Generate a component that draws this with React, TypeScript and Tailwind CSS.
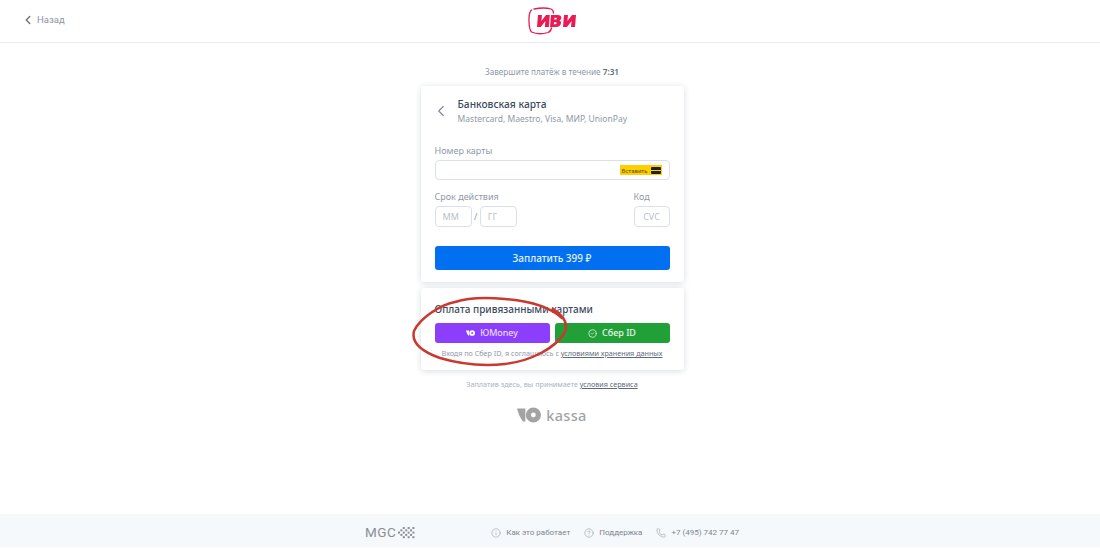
import { ChevronLeft, Info, CircleHelp, Phone, CircleCheck } from "lucide-react"

function IviLogo() {
  return (
    <svg width="52" height="28" viewBox="0 0 52 28" fill="none">
      <path
        d="M6 2 C12 .8 19 .8 23 2 C25 2.8 25.5 4 25.5 6 M3.5 3 C1.2 5 .8 9 1 14 C1.1 19 1.6 23 3.5 25 C8 27 15 27 20 25.5 C22 24.8 23 23.5 23.5 21"
        stroke="#ea1a55"
        strokeWidth="1.3"
        strokeLinecap="round"
      />
      <path
        d="M10 8h4l-.6 6L18 8h3.8l-1 12h-4l.6-6-4.6 6H9z M23 8h6.5c2.8 0 4 1.2 3.8 3-.1 1.2-.8 2-1.8 2.4 1.1.4 1.7 1.3 1.5 2.6-.3 2.6-2.1 4-5 4H22z M26.5 10.8l-.2 1.8h1.3c.7 0 1.1-.3 1.2-.9.1-.6-.2-.9-.9-.9z M26 15.2l-.2 2h1.5c.8 0 1.2-.4 1.3-1 .1-.6-.3-1-1-1z M36 8h4l-.6 6L44 8h4l-1 12h-4l.6-6-4.6 6H35z"
        fill="#ea1a55"
        fillRule="evenodd"
      />
    </svg>
  )
}

function YooIcon({ className, color }: { className: string; color: string }) {
  return (
    <svg className={className} viewBox="0 0 30 20" fill="none">
      <path d="M0 2h10.5v16H7.5C4 14 1.5 8 0 2z" fill={color} />
      <circle cx="20.5" cy="10" r="6.25" stroke={color} strokeWidth="6.5" />
    </svg>
  )
}

function MgcMark() {
  const dots = []
  for (let r = 0; r < 5; r++) {
    for (let c = 0; c < 7; c++) {
      if ((r + c) % 2 === 0 && !(r === 0 && c === 0) && !(r === 4 && c === 0)) {
        dots.push(<rect key={`${r}-${c}`} x={c * 2.4} y={r * 2.3} width="2" height="2" fill="#8b8f94" />)
      }
    }
  }
  return (
    <svg width="17" height="12" viewBox="0 0 17 12">
      {dots}
    </svg>
  )
}

export default function App() {
  return (
    <div className="relative flex h-[548px] w-[1100px] flex-col overflow-hidden bg-white font-['Noto_Sans',sans-serif]">
      {/* Header */}
      <header className="relative flex h-[43px] shrink-0 items-center justify-center border-b border-[#e9ecef]">
        <div className="absolute left-[21px] top-[13px] flex items-center gap-[2px] text-[#8d96a3]">
          <ChevronLeft className="h-[14px] w-[14px] text-[#6b7480]" strokeWidth={2.5} />
          <span className="font-['Roboto',sans-serif] text-[9.5px]">Назад</span>
        </div>
        <div className="ml-[7px] mt-[-1px]">
          <IviLogo />
        </div>
      </header>

      {/* Content */}
      <main className="flex flex-1 flex-col items-center pl-[4px]">
        <p className="mt-[22px] text-[8.2px] leading-[14px] text-[#8f99a8]">
          Завершите платёж в течение <span className="font-semibold text-[#5f6b7b]">7:31</span>
        </p>

        <section className="mt-[7px] h-[196px] w-[263px] rounded-[3px] bg-white px-[14px] pt-[11px] shadow-[0_1px_6px_rgba(40,60,90,0.18)]">
          <div className="flex items-start">
            <ChevronLeft className="ml-[-3px] mt-[5px] h-[18px] w-[18px] text-[#7c8794]" strokeWidth={1.5} />
            <div className="ml-[8px]">
              <h2 className="text-[10.2px] font-medium leading-[14px] text-[#3c4a5e]">Банковская карта</h2>
              <p className="mt-[1px] text-[8.55px] leading-[14px] text-[#8f99a8]">Mastercard, Maestro, Visa, МИР, UnionPay</p>
            </div>
          </div>

          <label className="mt-[19px] block text-[9px] leading-[12px] text-[#8f99a8]">Номер карты</label>
          <div className="mt-[3px] flex h-[20px] w-[235px] items-center justify-end rounded-[4px] border-[1.5px] border-[#d9dfeb] pr-[7px]">
            <div className="flex h-[10px] items-center gap-[3px] bg-[#ffcf00] px-[1px]">
              <span className="font-['Roboto',sans-serif] text-[6px] text-[#5c5200]">Вставить</span>
              <div className="flex h-[7px] w-[10px] flex-col justify-center rounded-[1px] bg-[#222]">
                <div className="h-[1px] bg-[#ffcf00]" />
              </div>
            </div>
          </div>

          <div className="mt-[11px] flex w-[235px] justify-between">
            <div>
              <div className="text-[9px] leading-[12px] text-[#8f99a8]">Срок действия</div>
              <div className="mt-[3px] flex items-center gap-[2.5px]">
                <div className="flex h-[21px] w-[37px] items-center rounded-[4px] border-[1.5px] border-[#d9dfeb] pl-[7px] text-[9px] text-[#b8bfca]">ММ</div>
                <span className="text-[9px] text-[#8f99a8]">/</span>
                <div className="flex h-[21px] w-[37px] items-center rounded-[4px] border-[1.5px] border-[#d9dfeb] pl-[7px] text-[9px] text-[#b8bfca]">ГГ</div>
              </div>
            </div>
            <div>
              <div className="text-[9px] leading-[12px] text-[#8f99a8]">Код</div>
              <div className="mt-[3px] flex h-[21px] w-[36px] items-center justify-center rounded-[4px] border-[1.5px] border-[#d9dfeb] text-[9px] text-[#b8bfca]">CVC</div>
            </div>
          </div>

          <button className="mt-[19px] flex h-[24px] w-[235px] items-center justify-center rounded-[3px] bg-[#0070f0] text-[10px] font-medium text-white/90">
            Заплатить 399 ₽
          </button>
        </section>

        <section className="mt-[6px] h-[82px] w-[263px] rounded-[3px] bg-white px-[14px] pt-[14px] shadow-[0_1px_6px_rgba(40,60,90,0.18)]">
          <h3 className="text-[10px] font-medium leading-[14px] text-[#3c4a5e]">Оплата привязанными картами</h3>
          <div className="mt-[7px] flex w-[235px] justify-between">
            <button className="flex h-[20px] w-[115px] items-center justify-center gap-[5px] rounded-[3px] bg-[#8b3ffd] text-[9px] text-white/90">
              <YooIcon className="h-[6px] w-[9px]" color="#ffffff" />
              ЮMoney
            </button>
            <button className="flex h-[20px] w-[115px] items-center justify-center gap-[5px] rounded-[3px] bg-[#21a038] text-[9px] font-medium text-white/90">
              <CircleCheck className="h-[9px] w-[9px]" />
              Сбер ID
            </button>
          </div>
          <p className="mt-[4px] whitespace-nowrap text-center text-[7.2px] leading-[12px] text-[#8f99a8]">
            Входя по Сбер ID, я соглашаюсь с <span className="text-[#5f6b7b] underline">условиями хранения данных</span>
          </p>
        </section>

        <p className="mt-[8px] text-[7.2px] leading-[12px] text-[#aab2bf]">
          Заплатив здесь, вы принимаете <span className="text-[#5f6b7b] underline">условия сервиса</span>
        </p>

        <div className="mt-[17px] flex items-center gap-[5px]">
          <YooIcon className="h-[16px] w-[24px]" color="#a3a3a3" />
          <span className="text-[14.5px] font-medium leading-[16px] tracking-[0.3px] text-[#a3a3a3]">kassa</span>
        </div>
      </main>

      {/* Footer */}
      <footer className="mb-[1px] flex h-[33px] shrink-0 items-center bg-[#f5f9fc] pl-[365px] pt-[5px] font-['Roboto',sans-serif] text-[8px] text-[#7c8591]">
        <span className="text-[13.5px] leading-none tracking-[0.5px] text-[#8b8f94]">MGC</span>
        <div className="ml-[2px]">
          <MgcMark />
        </div>
        <Info className="ml-[76px] h-[10px] w-[10px] text-[#9aa2ad]" strokeWidth={1.5} />
        <span className="ml-[5px]">Как это работает</span>
        <CircleHelp className="ml-[14px] h-[10px] w-[10px] text-[#9aa2ad]" strokeWidth={1.5} />
        <span className="ml-[5px]">Поддержка</span>
        <Phone className="ml-[14px] h-[10px] w-[10px] text-[#9aa2ad]" strokeWidth={1.5} />
        <span className="ml-[5px]">+7 (495) 742 77 47</span>
      </footer>

      {/* Hand-drawn annotation */}
      <svg className="pointer-events-none absolute left-[405px] top-[285px]" width="170" height="85" viewBox="0 0 170 85" fill="none">
        <path
          d="M157 33 C145 22 125 16 100 14 C80 12 62 13 50 17 C35 20 15 33 9 46 C6 58 18 67 35 73 C55 79 80 81 100 79 C125 76 150 64 160 47 C163 38 158 30 148 24"
          stroke="#c8392f"
          strokeWidth="2.5"
          strokeLinecap="round"
        />
      </svg>
    </div>
  )
}
